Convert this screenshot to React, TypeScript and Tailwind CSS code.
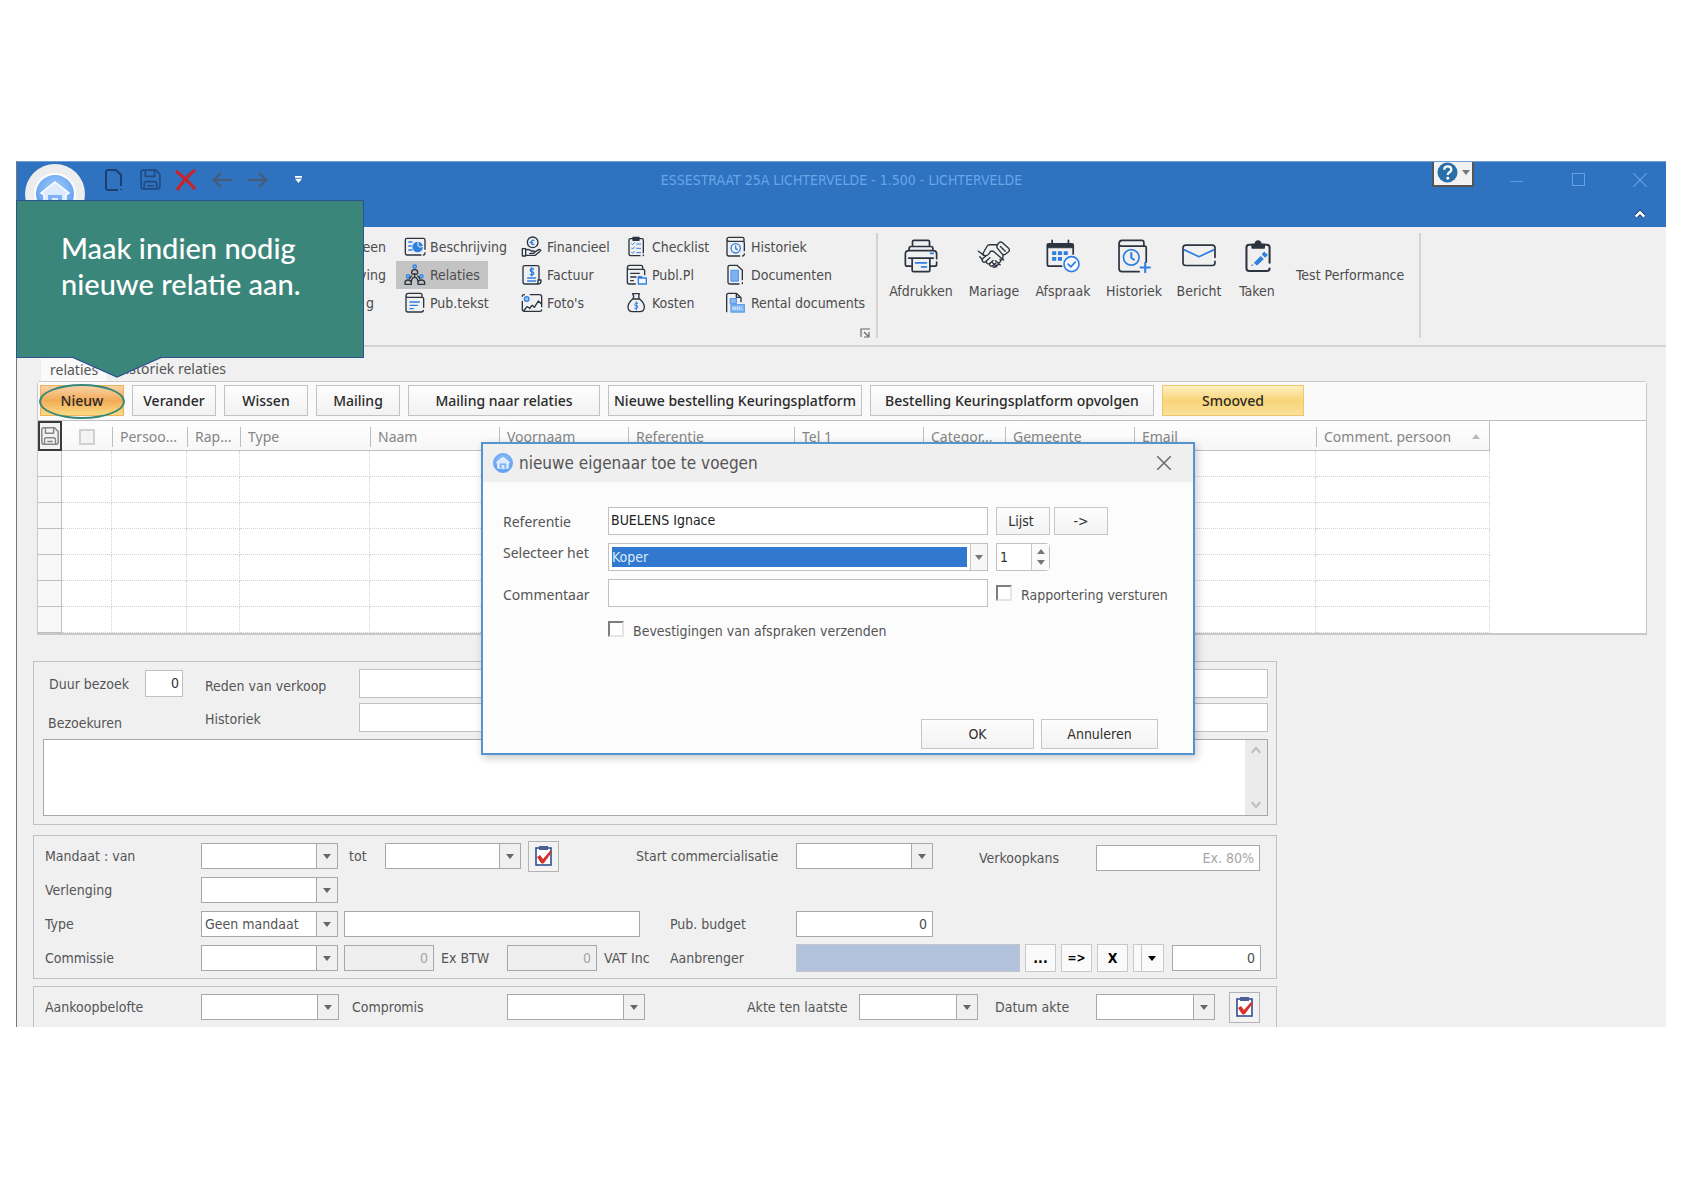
import React from "react";

const INK = "#2b333f";
const BLUE = "#2f7fe0";

type IconProps = { children: React.ReactNode };

/* ---------- icon frames ---------- */

function SmallIcon({ children }: IconProps) {
  return (
    <svg viewBox="0 0 66 66" className="h-[22px] w-[22px] shrink-0" fill="none" stroke={INK} strokeWidth="4" strokeLinecap="round" strokeLinejoin="round" aria-hidden="true">
      {children}
    </svg>
  );
}

function BigIcon({ children }: IconProps) {
  return (
    <svg viewBox="0 0 100 100" className="h-[34px] w-[34px] shrink-0" fill="none" stroke={INK} strokeWidth="5" strokeLinecap="round" strokeLinejoin="round" aria-hidden="true">
      {children}
    </svg>
  );
}

const icons = {
  beschrijving: (
    <SmallIcon>
      <path d="M63 40V12q0-5-5-5H9q-5 0-5 5v40q0 5 5 5h42M63 50v2q0 5-5 5" />
      <g stroke={BLUE}>
        <path d="M14 18h10M14 30h8M14 42h10" />
        <circle cx="41" cy="33" r="14" fill={BLUE} />
        <path d="M42 17v13q5 6 14 2" stroke="#f0f0f0" strokeWidth="3" />
      </g>
    </SmallIcon>
  ),
  relaties: (
    <SmallIcon>
      <g stroke={BLUE} fill="#8dbcf2">
        <circle cx="32" cy="8" r="5" />
        <circle cx="12" cy="37" r="5" />
        <circle cx="52" cy="37" r="5" />
      </g>
      <path d="M23 27v-2q0-8 9-8t9 8v2q0 3-3 3H26q-3 0-3-3zM32 31v9M3 61v-4q0-9 9-9t10 9v4zM42 61v-4q0-9 10-9t10 9v4zM22 54q1-14 10-14t10 14M23 36q-5 3-6 8M41 36q5 3 6 8" />
    </SmallIcon>
  ),
  pubtekst: (
    <SmallIcon>
      <path d="M6 12q0-8 7-8h36q5 0 5 5v7M6 12q0 4 6 4h43q4 0 4 4v26M6 12v42q0 6 6 6h40q6 0 6-5" />
      <path d="M18 30h28M18 40h22M18 50h10" stroke={BLUE} />
    </SmallIcon>
  ),
  financieel: (
    <SmallIcon>
      <circle cx="35" cy="19" r="16" />
      <path d="M39 13q-8-2-8 6t8 6M27 19h8" stroke={BLUE} />
      <path d="M4 38h10v22H4zM14 42q10-4 17 3h8q4 4-1 7H26M40 49l14-9q6 0 5 4L43 58H14" />
    </SmallIcon>
  ),
  factuur: (
    <SmallIcon>
      <path d="M12 60q-6 0-6-6V10q0-5 5-5h38q5 0 5 5v34M12 60h40q8 0 8-8v-4h-9v6q0 6-5 6" />
      <path d="M38 15q-10-3-10 3t5 5q6 1 5 6t-10 3M32 11v24M20 42h24M20 51h24" stroke={BLUE} />
    </SmallIcon>
  ),
  fotos: (
    <SmallIcon>
      <path d="M28 8h28q6 0 6 6v30M4 28v24q0 6 6 6h46q6 0 6-4M10 8q-6 0-6 5M10 54l8-10 8 4M34 40l6 6 12-19 9 8M26 50q4-8 8-10" />
      <circle cx="17" cy="21" r="7" stroke={BLUE} fill="#9cc5f5" />
    </SmallIcon>
  ),
  checklist: (
    <SmallIcon>
      <path d="M20 8h-7q-4 0-4 4v42q0 5 5 5h28M40 8h8q4 0 4 4v38M52 57v2" />
      <path d="M21 4h18v9H21z" fill={INK} />
      <path d="M17 23l3 3 5-6M17 36l3 3 5-6M17 49l3 3 5-6M32 24h12M32 37h12M32 50h12" stroke={BLUE} strokeWidth="3" />
    </SmallIcon>
  ),
  publ: (
    <SmallIcon>
      <path d="M4 12q0-8 7-8h34q5 0 5 5v7M4 12q0 4 6 4h42q4 0 4 4v12M4 12v42q0 6 6 6h18M14 28h26M14 39h16M14 50h8" />
      <path d="M37 42h24v18H37zM37 42v-4h10v4" stroke={BLUE} fill="#f4f8fd" />
    </SmallIcon>
  ),
  kosten: (
    <SmallIcon>
      <path d="M20 5h20l-2 8 2 8H21l2-8zM20 21C12 28 6 36 6 45q0 14 14 14h21q14 0 14-14c0-9-6-17-14-24" />
      <path d="M35 34q-9-3-9 3t5 4 4 5-9 3M31 29v25" stroke={BLUE} strokeWidth="3" />
    </SmallIcon>
  ),
  historiek: (
    <SmallIcon>
      <path d="M6 10q0-6 6-6h40q5 0 5 5v6M6 10q0 6 6 6h42q4 0 4 4v24M6 10v44q0 6 6 6h32M58 54q0 5-5 6" />
      <circle cx="32" cy="37" r="14" stroke={BLUE} />
      <path d="M32 30v8l5 3" stroke={BLUE} />
    </SmallIcon>
  ),
  documenten: (
    <SmallIcon>
      <path d="M36 4H14q-5 0-5 5v46q0 5 5 5h28M36 4l16 15v28M52 56v3" />
      <path d="M18 19h22v32H18z" fill="#7eb2f0" stroke="#5c9fec" />
    </SmallIcon>
  ),
  rental: (
    <SmallIcon>
      <path d="M34 4H10q-5 0-5 5v50M34 4l14 13v12M34 4v12h12" />
      <path d="M16 20h18v14H16zM18 38h40v22H18z" fill="#8fbcf3" stroke="#5c9fec" />
      <path d="M24 46v6l4-4 4 4v-6M38 46v6M44 46v6M50 52v-1" stroke="#e8f1fc" strokeWidth="2.5" />
    </SmallIcon>
  ),
};

const bigIcons = {
  afdrukken: (
    <BigIcon>
      <path d="M25 22V8q0-4 4-4h42q4 0 4 4v14M15 34v-6q0-6 6-6h58q6 0 6 6v6M20 80H10q-6 0-6-6V44q0-10 10-10h72q10 0 10 10v14M96 68v6q0 6-6 6H80M14 56h72M24 56v36q0 4 4 4h44q4 0 4-4V56" />
      <path d="M34 70h32M52 82h14M78 42h8" stroke={BLUE} />
    </BigIcon>
  ),
  mariage: (
    <BigIcon>
      <g strokeWidth="4">
        <path d="M62 14q6-8 13-3l18 16q5 6-1 11l-9 7q-6 3-10-2L60 27q-4-7 2-13zM69 22l14 14" />
        <path d="M60 17H38q-6 0-9 5L18 42q-2 6 4 7 8 2 14-7l4-6h8l30 26" />
        <path d="M76 47q2 10-3 14M4 36l17 12M8 52l8 8M26 50l-10 8q-3 4 1 8t8 1l4-4q-3 6 1 9t8-1q-3 5 2 8t8-2M68 60q4 8-4 10 0 8-8 8-2 6-8 5M28 64l10-9M38 72l9-9M47 78l8-7M54 64l14 12M46 70l12 12" />
      </g>
    </BigIcon>
  ),
  afspraak: (
    <BigIcon>
      <path d="M46 80H10q-6 0-6-6V18q0-4 4-4h68q4 0 4 4v26M18 4v12M66 4v12" />
      <path d="M5 15h74v11H5z" fill={INK} strokeWidth="2" />
      <path d="M18 36h12v11H18zM35 36h12v11H35zM52 36h12v11H52zM18 53h12v11H18zM35 53h12v11H35z" fill={BLUE} stroke="none" />
      <circle cx="75" cy="74" r="22" stroke={BLUE} fill="#f7faff" />
      <path d="M65 74l8 8 13-14" stroke={BLUE} />
    </BigIcon>
  ),
  historiek: (
    <BigIcon>
      <path d="M6 14q0-10 9-10h58q6 0 6 6v9M6 14q0 7 8 7h68q4 0 4 4v43M6 14v73q0 9 9 9h50" />
      <circle cx="42" cy="54" r="23" stroke={BLUE} />
      <path d="M42 41v14l8 6M83 70v28M69 84h28" stroke={BLUE} strokeWidth="6" />
    </BigIcon>
  ),
  bericht: (
    <BigIcon>
      <path d="M97 54V26q0-8-8-8H11q-8 0-8 8v44q0 8 8 8h78q8 0 8-8v-4" />
      <path d="M7 32l43 20 43-20" stroke={BLUE} />
    </BigIcon>
  ),
  taken: (
    <BigIcon>
      <path d="M36 17h-9q-8 0-8 8v61q0 8 8 8h52q8 0 8-7M87 70V25q0-8-8-8h-8" strokeWidth="6" />
      <path d="M36 26V16h9q1-10 8-10t9 10h9v10z" fill={INK} />
      <path d="M38 76l-4 2M43 70l18-18 7 7-18 17zM66 45l5-6 9 8-6 6z" stroke={BLUE} fill={BLUE} strokeWidth="3" />
    </BigIcon>
  ),
};

function HouseDisc({ className, ring = true }: { className: string; ring?: boolean }) {
  return (
    <svg viewBox={ring ? "0 0 60 60" : "9 9 42 42"} className={className} aria-hidden="true">
      <defs>
        <radialGradient id="disc" cx="0.5" cy="0.4" r="0.6">
          <stop offset="0" stopColor="#a9cdfb" />
          <stop offset="1" stopColor="#5a9cf0" />
        </radialGradient>
      </defs>
      {ring && <circle cx="30" cy="30" r="30" fill="#ededee" />}
      <circle cx="30" cy="30" r="20" fill="url(#disc)" stroke={ring ? "#ffffff" : "#6aa8f5"} strokeWidth="2" />
      <path d="M30 18l14 11-3 2v10H19V31l-3-2z" fill="#dcebfd" stroke="#fff" strokeWidth="1.5" />
      <path d="M23 31h14v10h-4v-7h-6v7h-4z" fill="#7db2f5" />
    </svg>
  );
}

function FloppyIcon({ className, stroke }: { className: string; stroke: string }) {
  return (
    <svg viewBox="0 0 22 22" className={className} fill="none" stroke={stroke} strokeWidth="1.6" strokeLinejoin="round" aria-hidden="true">
      <path d="M2 4q0-2 2-2h12l4 4v12q0 2-2 2H4q-2 0-2-2z" />
      <path d="M6 2v6h9V2M5 20v-5q0-2 2-2h8q2 0 2 2v5M8 17h6" />
    </svg>
  );
}

function ClipboardCheck() {
  return (
    <svg viewBox="0 0 20 22" className="h-[22px] w-5" aria-hidden="true">
      <rect x="2" y="3" width="15" height="17" fill="#fff" stroke="#2f4f8f" strokeWidth="1.6" />
      <rect x="5" y="1" width="9" height="4" fill="#4b5f92" />
      <path d="M3 12l3-2 3 4 7-8 2 1-8 11q-2 1-3 0z" fill="#d8302a" />
    </svg>
  );
}

function Triangle({ up = false, className = "" }: { up?: boolean; className?: string }) {
  return (
    <svg viewBox="0 0 8 5" className={"h-[5px] w-2 " + className} aria-hidden="true">
      <path d={up ? "M0 5L4 0l4 5z" : "M0 0h8L4 5z"} fill="currentColor" />
    </svg>
  );
}

/* ---------- form parts ---------- */

const field = "h-[26px] shrink-0 border border-[#a8a8a8] bg-white px-[5px] text-[#4a4a4a] outline-none";
const disabledField = "h-[26px] w-[90px] shrink-0 border border-[#a8a8a8] bg-[#efefef] px-[5px] text-right text-[#a5a5a5]";

function Combo({ label, value = "", className = "" }: { label: string; value?: string; className?: string }) {
  return (
    <div className={"relative h-[26px] shrink-0 border border-[#a8a8a8] bg-white " + className}>
      <select aria-label={label} className="h-full w-full appearance-none bg-transparent pl-[3px] pr-6 outline-none" defaultValue={value}>
        <option value={value}>{value}</option>
      </select>
      <span className="pointer-events-none absolute inset-y-0 right-0 flex w-[21px] items-center justify-center border-l border-[#a8a8a8] bg-[#f0f0f0] text-[#666]">
        <Triangle />
      </span>
    </div>
  );
}

function CheckButton({ label }: { label: string }) {
  return (
    <button aria-label={label} className="flex h-[31px] w-[31px] shrink-0 items-center justify-center border border-[#b4b4b4] bg-[#f2f2f2]">
      <ClipboardCheck />
    </button>
  );
}

const group = "w-full max-w-[1244px] border border-[#c0c0c0]";

/* ---------- title bar ---------- */

function TitleBar() {
  const tool = "flex w-9 items-center justify-center";
  return (
    <header className="relative flex h-[66px] border-t border-[#6f9fd8] bg-[#2e72c0]">
      <HouseDisc className="ml-2 mt-[2px] h-[60px] w-[60px]" />
      <div className="ml-[11px] flex h-[35px] items-center">
        <button aria-label="Nieuw document" className={tool}>
          <svg viewBox="0 0 22 24" className="h-6 w-[22px]" fill="none" stroke="#1d3f6e" strokeWidth="2" strokeLinejoin="round"><path d="M13 2H5q-2 0-2 2v16q0 2 2 2h10M18 18V7l-5-5M18 22v-1" /></svg>
        </button>
        <button aria-label="Opslaan" className={tool}><FloppyIcon className="h-[23px] w-[23px]" stroke="#234a7f" /></button>
        <button aria-label="Verwijderen" className={tool}>
          <svg viewBox="0 0 24 24" className="h-6 w-6" fill="none" stroke="#c3262f" strokeWidth="3.4"><path d="M2 3q9 7 19 18M21 2Q11 10 3 22" /></svg>
        </button>
        <button aria-label="Vorige" className={tool}>
          <svg viewBox="0 0 22 20" className="h-5 w-[22px]" fill="none" stroke="#4a5a6e" strokeWidth="2.2"><path d="M21 10H3M10 3l-7 7 7 7" /></svg>
        </button>
        <button aria-label="Volgende" className={tool}>
          <svg viewBox="0 0 22 20" className="h-5 w-[22px]" fill="none" stroke="#4a5a6e" strokeWidth="2.2"><path d="M1 10h18M12 3l7 7-7 7" /></svg>
        </button>
        <button aria-label="Werkbalk aanpassen" className="ml-1 flex w-9 justify-center">
          <svg viewBox="0 0 8 8" className="h-[7px] w-[7px]" fill="#fff"><path d="M0 0h8v2H0zM0 3h8L4 8z" /></svg>
        </button>
      </div>
      <h1 className="pointer-events-none absolute inset-x-0 top-0 flex h-[35px] items-center justify-center text-sm text-[#68a6e8]">
        ESSESTRAAT 25A LICHTERVELDE - 1.500 - LICHTERVELDE
      </h1>
      <div className="ml-auto flex flex-col">
        <div className="flex h-[35px]">
          <button aria-label="Help" className="mr-[11px] flex h-[25px] w-[42px] items-center justify-center gap-1 border-2 border-t-0 border-[#555] bg-[#f2f2f2] pb-[3px] text-[#777]">
            <svg viewBox="0 0 22 22" className="h-[21px] w-[21px]" fill="none" aria-hidden="true">
              <circle cx="11" cy="11" r="10.5" fill="#2a6ea8" />
              <path d="M7.500 8q.3-3.500 3.800-3.500T15 7.800q0 1.700-1.900 2.900T11.300 13.600" stroke="#fff" strokeWidth="2.400" />
              <circle cx="11.300" cy="17" r="1.500" fill="#fff" />
            </svg>
            <Triangle />
          </button>
          <button aria-label="Minimaliseren" className="flex w-[62px] items-center justify-center"><span className="mt-1 h-px w-[13px] bg-[#5b9be0]" /></button>
          <button aria-label="Maximaliseren" className="flex w-[62px] items-center justify-center"><span className="h-[13px] w-[13px] border border-[#62a2e6]" /></button>
          <button aria-label="Sluiten" className="flex w-[57px] items-center justify-center pl-1">
            <svg viewBox="0 0 14 14" className="h-[14px] w-[14px]" stroke="#62a2e6" strokeWidth="1.200"><path d="M0 0l14 14M14 0L0 14" /></svg>
          </button>
        </div>
        <button aria-label="Lint samenvouwen" className="mr-5 mt-[9px] flex h-4 w-3 items-center self-end">
          <svg viewBox="0 0 14 10" className="h-[10px] w-3" fill="none"><path d="M2 8l5-5 5 5" stroke="#173c6b" strokeWidth="5" /><path d="M2 8l5-5 5 5" stroke="#fff" strokeWidth="3" /></svg>
        </button>
      </div>
    </header>
  );
}

/* ---------- ribbon ---------- */

function Ribbon() {
  const columns = [
    { w: "w-[117px]", items: [["Beschrijving", icons.beschrijving], ["Relaties", icons.relaties], ["Pub.tekst", icons.pubtekst]] },
    { w: "w-[105px]", items: [["Financieel", icons.financieel], ["Factuur", icons.factuur], ["Foto's", icons.fotos]] },
    { w: "w-[99px]", items: [["Checklist", icons.checklist], ["Publ.Pl", icons.publ], ["Kosten", icons.kosten]] },
    { w: "w-[142px]", items: [["Historiek", icons.historiek], ["Documenten", icons.documenten], ["Rental documents", icons.rental]] },
  ] as { w: string; items: [string, React.ReactNode][] }[];
  const big = [
    ["w-20", "Afdrukken", bigIcons.afdrukken],
    ["w-[66px]", "Mariage", bigIcons.mariage],
    ["w-[72px]", "Afspraak", bigIcons.afspraak],
    ["w-[70px]", "Historiek", bigIcons.historiek],
    ["w-[60px]", "Bericht", bigIcons.bericht],
    ["w-14", "Taken", bigIcons.taken],
  ] as [string, string, React.ReactNode][];
  return (
    <nav className="flex h-[120px] border-b-2 border-[#d3d3d3] pt-[6px] text-sm text-[#4c4c4c]">
      <div className="flex w-[379px] shrink-0 flex-col items-end pr-[10px]">
        {["een", "ving", "g"].map((t) => (
          <button key={t} className={"flex h-7 items-center " + (t === "g" ? "mr-3" : "")}>{t}</button>
        ))}
      </div>
      {columns.map((c, i) => (
        <div key={i} className={"flex shrink-0 flex-col items-start " + c.w}>
          {c.items.map(([text, icon]) => (
            <button
              key={text}
              className={"flex h-7 items-center gap-1 whitespace-nowrap pl-2 pr-2 " + (text === "Relaties" ? "bg-[#c3c3c3]" : "")}
            >
              {icon}
              {text}
            </button>
          ))}
        </div>
      ))}
      <div className="flex h-[105px] w-[19px] shrink-0 items-end border-r-2 border-[#d3d3d3] pl-px">
        <button aria-label="Meer opties">
          <svg viewBox="0 0 10 10" className="h-[10px] w-[10px]" fill="none" stroke="#666" strokeWidth="1.200"><path d="M1 9V1h9M4 4l4 4M9 4v5H4" /></svg>
        </button>
      </div>
      <div className="flex h-[105px] shrink-0 border-r-2 border-[#d3d3d3] pl-[3px] pr-[15px]">
        {big.map(([w, text, icon]) => (
          <button key={text} className={"flex flex-col items-center gap-2 pt-[6px] " + w}>
            {icon}
            <span>{text}</span>
          </button>
        ))}
        <button className="mb-[21px] whitespace-nowrap pl-[11px]">Test Performance</button>
      </div>
    </nav>
  );
}

/* ---------- relations panel ---------- */

function RelationsPanel() {
  const heads: [string, string][] = [
    ["w-[75px]", "Persoo..."],
    ["w-[53px]", "Rap..."],
    ["w-[130px]", "Type"],
    ["w-[129px]", "Naam"],
    ["w-[129px]", "Voornaam"],
    ["w-[166px]", "Referentie"],
    ["w-[129px]", "Tel 1"],
    ["w-[82px]", "Categor..."],
    ["w-[129px]", "Gemeente"],
    ["w-[182px]", "Email"],
    ["w-[174px]", "Comment. persoon"],
  ];
  const buttons: [string, string][] = [
    ["w-[84px]", "Verander"],
    ["w-[84px]", "Wissen"],
    ["w-[84px]", "Mailing"],
    ["w-[192px]", "Mailing naar relaties"],
    ["w-[254px]", "Nieuwe bestelling Keuringsplatform"],
    ["w-[284px]", "Bestelling Keuringsplatform opvolgen"],
  ];
  const headCell = "border-b border-[#bfbfbf] bg-linear-to-b from-[#fefefe] to-[#f7f7f7] p-0 pt-[2px] ";
  return (
    <section className="mr-[19px] ml-5 font-['Noto_Sans',sans-serif] text-sm">
      <div className="flex h-[34px] items-end pl-1 text-[#555]" role="tablist">
        <button role="tab" aria-selected="true" className="h-[23px] w-[66px] bg-[#fafafa] pl-[9px] text-left">relaties</button>
        <button role="tab" aria-selected="false" className="h-[23px] pb-[2px] pl-[10px]">historiek relaties</button>
      </div>
      <div className="rounded-t border border-b-2 border-[#c8c8c8] bg-white">
        <div className="flex h-[39px] items-start gap-2 border-b border-[#bfbfbf] bg-[#fafafa] pl-[2px] pt-[3px] font-medium text-[#2a2a2a]">
          <div className="relative">
            <button className="h-[31px] w-[84px] border border-[#f0b25f] bg-linear-to-b from-[#f8d3a6] via-[#f2ab55] to-[#fbdc84] pt-px">Nieuw</button>
            <span className="pointer-events-none absolute -inset-x-px -bottom-[3px] -top-px rounded-[50%] border-2 border-[#36877a]" />
          </div>
          {buttons.map(([w, text]) => (
            <button key={text} className={"h-[31px] whitespace-nowrap border border-[#c2c2c2] bg-linear-to-b from-[#fdfdfd] to-[#f2f2f2] pt-px " + w}>{text}</button>
          ))}
          <button className="h-[31px] w-[142px] border border-[#f0c470] bg-linear-to-b from-[#fdf0c0] via-[#f8d577] to-[#fae09a]">Smooved</button>
        </div>
        <table className="border-separate border-spacing-0 text-[#858585]">
          <thead>
            <tr className="h-[30px]">
              <th className="w-6 min-w-6 border-2 border-[#3a3a3a] bg-[#f2f2f2] p-0">
                <FloppyIcon className="mx-auto h-5 w-5" stroke="#858585" />
              </th>
              <th className={headCell + "w-[50px] min-w-[50px]"}>
                <input type="checkbox" aria-label="Alles selecteren" className="mx-auto block h-4 w-4 appearance-none border-2 border-[#d0d0d0] bg-[#f3f3f3]" />
              </th>
              {heads.map(([w, text], i) => (
                <th key={text} className={headCell + "text-left font-normal " + w + (i === 10 ? " border-r" : "")}>
                  <span className="flex h-5 items-center justify-between whitespace-nowrap border-l border-[#bdbdbd] pl-[7px]">
                    {text}
                    {i === 10 && <Triangle up className="mr-[9px] text-[#bbb]" />}
                  </span>
                </th>
              ))}
            </tr>
          </thead>
          <tbody>
            {[0, 1, 2, 3, 4, 5, 6].map((r) => (
              <tr key={r} className="h-[26px]">
                <td className="border-b border-r border-[#bfbfbf] bg-[#f8f8f8] p-0" />
                {Array.from({ length: 12 }, (_, c) => (
                  <td key={c} className="border-b border-r border-dotted border-[#d2d2d2] p-0" />
                ))}
              </tr>
            ))}
          </tbody>
        </table>
      </div>
    </section>
  );
}

/* ---------- property forms ---------- */

function VisitGroup() {
  const box = "h-full grow border border-[#c0c0c0] bg-white outline-none";
  return (
    <section className={group + " pb-2 pl-[9px] pr-2 pt-[7px]"}>
      <div className="flex">
        <div className="w-[162px] shrink-0">
          <div className="flex h-[29px] items-center pl-[6px]">
            <label htmlFor="duur" className="w-24 shrink-0">Duur bezoek</label>
            <input id="duur" defaultValue="0" className="h-[27px] w-[38px] border border-[#c0c0c0] bg-white px-[3px] pb-[2px] text-right text-[#333] outline-none" />
          </div>
          <label htmlFor="bezoekuren" className="block pl-[5px] pt-[15px]">Bezoekuren</label>
        </div>
        <div className="flex grow flex-col gap-[5px]">
          <div className="flex h-[29px] items-center">
            <label htmlFor="reden" className="w-[154px] shrink-0 pt-1">Reden van verkoop</label>
            <input id="reden" className={box} />
          </div>
          <div className="flex h-[29px] items-center">
            <label htmlFor="hist" className="w-[154px] shrink-0 pt-[2px]">Historiek</label>
            <input id="hist" className={box} />
          </div>
        </div>
      </div>
      <div className="mt-[6px] flex h-[77px] border border-[#a8a8a8] bg-white">
        <textarea id="bezoekuren" className="h-full grow resize-none outline-none" />
        <div className="flex w-[22px] flex-col items-center justify-between bg-[#ebebeb] py-[6px]" aria-hidden="true">
          <svg viewBox="0 0 12 9" className="h-2 w-[10px]" fill="none" stroke="#bdbdbd" strokeWidth="2.500"><path d="M1 8l5-6 5 6" /></svg>
          <svg viewBox="0 0 12 9" className="h-2 w-[10px]" fill="none" stroke="#bdbdbd" strokeWidth="2.500"><path d="M1 1l5 6 5-6" /></svg>
        </div>
      </div>
    </section>
  );
}

function MandateGroup() {
  const row = "flex h-[26px] items-center";
  const small = "h-7 w-[31px] shrink-0 border border-[#c8c8c8] bg-[#fafafa] font-bold text-black";
  return (
    <section className={group + " flex flex-col gap-2 pb-[7px] pl-[11px] pt-[7px]"}>
      <div className={row}>
        <span className="w-[156px] shrink-0">Mandaat : van</span>
        <Combo label="Mandaat van" className="w-[137px]" />
        <span className="w-[47px] shrink-0 pl-[11px]">tot</span>
        <Combo label="Mandaat tot" className="w-[136px]" />
        <div className="ml-[7px]"><CheckButton label="Mandaat taak" /></div>
        <span className="ml-[77px] w-40 shrink-0">Start commercialisatie</span>
        <Combo label="Start commercialisatie" className="w-[137px]" />
        <label htmlFor="kans" className="ml-[46px] w-[117px] shrink-0 pt-1">Verkoopkans</label>
        <input id="kans" placeholder="Ex. 80%" className={field + " mt-1 w-[164px] text-right placeholder:text-[#a5a5a5]"} />
      </div>
      <div className={row}>
        <span className="w-[156px] shrink-0">Verlenging</span>
        <Combo label="Verlenging" className="w-[137px]" />
      </div>
      <div className={row}>
        <span className="w-[156px] shrink-0">Type</span>
        <Combo label="Type" value="Geen mandaat" className="w-[137px]" />
        <input aria-label="Type omschrijving" className={field + " ml-[6px] w-[296px]"} />
        <label htmlFor="budget" className="ml-[30px] w-[126px] shrink-0">Pub. budget</label>
        <input id="budget" defaultValue="0" className={field + " w-[137px] text-right"} />
      </div>
      <div className={row}>
        <span className="w-[156px] shrink-0">Commissie</span>
        <Combo label="Commissie" className="w-[137px]" />
        <input aria-label="Commissie ex BTW" defaultValue="0" disabled className={disabledField + " ml-[6px]"} />
        <span className="w-[73px] shrink-0 pl-[7px]">Ex BTW</span>
        <input aria-label="Commissie VAT inc" defaultValue="0" disabled className={disabledField} />
        <span className="w-[73px] shrink-0 pl-[7px]">VAT Inc</span>
        <label htmlFor="aanbrenger" className="w-[126px] shrink-0">Aanbrenger</label>
        <input id="aanbrenger" className="h-7 w-[224px] shrink-0 border border-[#c3c6cc] bg-[#b3c2dc] outline-none" />
        <div className="ml-[5px] flex shrink-0 gap-[5px]">
          <button className={small}>...</button>
          <button className={small + " text-xs"}>=&gt;</button>
          <button className={small}>X</button>
          <button aria-label="Meer" className={small + " flex items-center justify-center"}>
            <span className="mr-[6px] h-full w-px bg-[#c6c6c6]" />
            <Triangle />
          </button>
        </div>
        <input aria-label="Bedrag" defaultValue="0" className={field + " ml-[8px] w-[89px] text-right"} />
      </div>
    </section>
  );
}

function DeedGroup() {
  return (
    <section className="flex h-[41px] w-full max-w-[1244px] items-center border border-b-0 border-[#c0c0c0] pl-[11px]">
      <span className="w-[156px] shrink-0">Aankoopbelofte</span>
      <Combo label="Aankoopbelofte" className="w-[138px]" />
      <span className="w-[168px] shrink-0 pl-[13px]">Compromis</span>
      <Combo label="Compromis" className="w-[138px]" />
      <span className="ml-[102px] w-28 shrink-0">Akte ten laatste</span>
      <Combo label="Akte ten laatste" className="w-[119px]" />
      <span className="ml-[17px] w-[101px] shrink-0">Datum akte</span>
      <Combo label="Datum akte" className="w-[119px]" />
      <div className="ml-[14px]"><CheckButton label="Akte taak" /></div>
    </section>
  );
}

/* ---------- dialog ---------- */

function Dialog() {
  const btn = "border border-[#c6c6c6] bg-linear-to-b from-[#fdfdfd] to-[#f3f3f3] text-[#2f2f2f]";
  const box = "w-[380px] shrink-0 border border-[#c0c0c0] bg-white";
  const check = "h-4 w-4 shrink-0 appearance-none border-2 border-[#e4e4e4] border-l-[#7d7d7d] border-t-[#7d7d7d] bg-white";
  return (
    <div role="dialog" aria-label="nieuwe eigenaar toe te voegen" className="absolute left-[464px] top-[281px] w-[714px] border-2 border-[#5494cf] bg-[#fcfcfc] text-[#555] shadow-[2px_3px_8px_rgba(0,0,0,0.22)]">
      <div className="flex h-[38px] items-center bg-[#efefef] pl-[10px] pr-[22px]">
        <HouseDisc ring={false} className="h-5 w-5" />
        <h2 className="ml-[6px] text-[17px]">nieuwe eigenaar toe te voegen</h2>
        <button aria-label="Dialoog sluiten" className="ml-auto">
          <svg viewBox="0 0 14 14" className="h-[14px] w-[14px]" stroke="#6a6a6a" strokeWidth="1.500"><path d="M0 0l14 14M14 0L0 14" /></svg>
        </button>
      </div>
      <div className="flex flex-col gap-2 pl-[20px] pt-[25px]">
        <div className="flex h-7 items-center">
          <label htmlFor="ref" className="w-[105px] shrink-0 pt-[2px] font-['Noto_Sans',sans-serif]">Referentie</label>
          <input id="ref" defaultValue="BUELENS Ignace" className={box + " h-7 px-[2px] pb-[2px] text-[#222] outline-none"} />
          <button className={btn + " ml-2 h-7 w-[54px] pr-1"}>Lijst</button>
          <button className={btn + " ml-1 h-7 w-[54px]"}>-&gt;</button>
        </div>
        <div className="flex h-7">
          <label htmlFor="soort" className="w-[105px] shrink-0 font-['Noto_Sans',sans-serif]">Selecteer het</label>
          <div className={box + " flex p-[3px] pr-0"}>
            <select id="soort" defaultValue="Koper" className="grow appearance-none bg-[#3078d0] text-[#dcebfa] outline-none">
              <option>Koper</option>
            </select>
            <span className="pointer-events-none -my-[3px] ml-[3px] flex w-[17px] items-center justify-center border-l border-[#c6c6c6] bg-[#f7f7f7] text-[#777]"><Triangle /></span>
          </div>
          <div className="ml-2 flex w-[54px] rounded-r border border-[#c0c0c0] bg-white">
            <input aria-label="Aantal" defaultValue="1" className="w-[34px] bg-transparent pl-[3px] text-[#333] outline-none" />
            <span className="flex grow flex-col items-center justify-evenly border-l border-[#c6c6c6] bg-[#fafafa] text-[#777]"><Triangle up /><Triangle /></span>
          </div>
        </div>
        <div className="flex h-7 items-center">
          <label htmlFor="comm" className="w-[105px] shrink-0 pt-1 font-['Noto_Sans',sans-serif]">Commentaar</label>
          <input id="comm" className={box + " h-7 outline-none"} />
          <input id="rapp" type="checkbox" className={check + " ml-2"} />
          <label htmlFor="rapp" className="ml-[9px] pt-1">Rapportering versturen</label>
        </div>
        <div className="flex h-7 items-center pl-[105px]">
          <input id="bev" type="checkbox" className={check} />
          <label htmlFor="bev" className="ml-[9px] pt-1">Bevestigingen van afspraken verzenden</label>
        </div>
      </div>
      <div className="mt-[76px] flex h-[30px] justify-end gap-[7px] pr-[35px]">
        <button className={btn + " w-[113px]"}>OK</button>
        <button className={btn + " w-[117px]"}>Annuleren</button>
      </div>
      <div className="h-1" />
    </div>
  );
}

/* ---------- callout ---------- */

function Callout() {
  return (
    <div className="absolute -left-px top-[39px] w-[348px]">
      <p className="h-[158px] border border-[#2f528f] bg-[#3b867a] pl-11 pt-[29px] font-['Lato',sans-serif] text-[29px] font-medium leading-9 text-white">
        Maak indien nodig
        <br />
        nieuwe relatie aan.
      </p>
      <svg viewBox="0 0 90 22" className="relative -mt-[2px] ml-[56px] block h-[22px] w-[90px]" aria-hidden="true">
        <path d="M0 0h90v1L45 21 0 1z" fill="#3b867a" />
        <path d="M0 1l45 20L90 1" fill="none" stroke="#2f528f" strokeWidth="1.300" />
      </svg>
    </div>
  );
}

export default function App() {
  return (
    <main className="min-h-screen bg-white pb-40 pl-4 pr-[18px] pt-[161px] font-['DejaVu_Sans_Condensed','Noto_Sans',sans-serif] text-sm text-[#555]">
      <div className="relative border-l border-[#777] bg-[#f0f0f0]">
        <TitleBar />
        <Ribbon />
        <RelationsPanel />
        <div className="mt-[26px] flex flex-col px-4">
          <VisitGroup />
          <div className="h-[10px]" />
          <MandateGroup />
          <div className="h-[7px]" />
          <DeedGroup />
        </div>
        <Dialog />
        <Callout />
      </div>
    </main>
  );
}
